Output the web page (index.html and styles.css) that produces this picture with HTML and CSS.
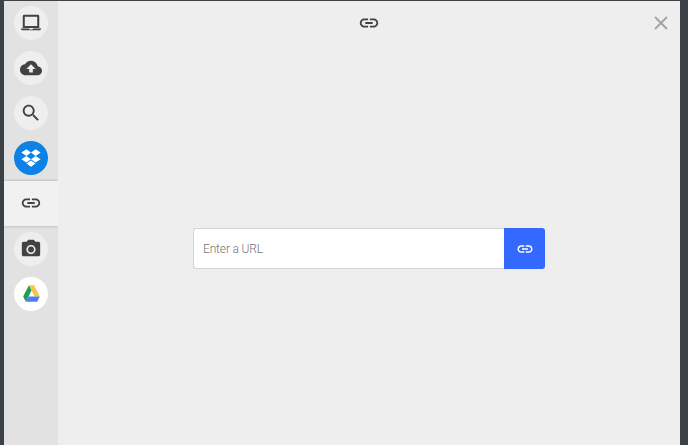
FILE: index.html
```html
<!DOCTYPE html>
<html lang="en">
<head>
<meta charset="utf-8">
<title>Select a file</title>
<link rel="stylesheet" href="styles.css">
</head>
<body>
<div class="modal">
  <nav class="sidebar">
    <div class="item"><span class="disc"><svg class="icon" viewBox="0 0 24 24"><path fill-rule="evenodd" d="M4.5 3h15A1.5 1.5 0 0 1 21 4.500V17.500H3V4.500A1.500 1.500 0 0 1 4.500 3zM5.200 5.200V15.300H18.800V5.200zM1 18h8.500c.4.700 1 1 1.500 1h2c.5 0 1.100-.3 1.500-1H23c0 1.200-.8 2-2 2H3c-1.200 0-2-.8-2-2z"/></svg></span></div>
    <div class="item"><span class="disc"><svg class="icon" viewBox="0 0 24 24"><path d="M19.35 10.04C18.67 6.59 15.64 4 12 4 9.11 4 6.6 5.64 5.35 8.04 2.34 8.36 0 10.91 0 14c0 3.31 2.69 6 6 6h13c2.76 0 5-2.24 5-5 0-2.64-2.05-4.78-4.65-4.96zM14 13v4h-4v-4H7l5-5 5 5h-3z"/></svg></span></div>
    <div class="item"><span class="disc"><svg class="icon" viewBox="0 0 24 24"><path d="M15.5 14h-.79l-.28-.27C15.41 12.59 16 11.11 16 9.5 16 5.91 13.09 3 9.5 3S3 5.91 3 9.5 5.91 16 9.5 16c1.61 0 3.09-.59 4.23-1.57l.27.28v.79l5 4.99L20.49 19l-4.99-5zm-6 0C7.01 14 5 11.99 5 9.5S7.01 5 9.5 5 14 7.01 14 9.5 11.99 14 9.5 14z"/></svg></span></div>
    <div class="item"><span class="disc disc-dropbox"><svg class="icon" viewBox="0 0 24 24"><path class="white" d="M7 2.5 1.5 6.1 7 9.7l5-3.6zM17 2.5l-5 3.6 5 3.6 5.5-3.6zM1.5 13.3 7 16.9l5-3.6-5-3.6zM17 9.7l-5 3.6 5 3.6 5.5-3.6zM7 18.1l5 3.4 5-3.4-5-3.3z"/></svg></span></div>
    <div class="item item-active"><svg class="icon" viewBox="0 0 24 24"><path d="M3.9 12c0-1.71 1.39-3.1 3.1-3.1h4V7H7c-2.76 0-5 2.24-5 5s2.24 5 5 5h4v-1.9H7c-1.71 0-3.1-1.39-3.1-3.1zM8 13h8v-2H8v2zm9-6h-4v1.9h4c1.71 0 3.1 1.39 3.1 3.1s-1.39 3.1-3.1 3.1h-4V17h4c2.76 0 5-2.24 5-5s-2.24-5-5-5z"/></svg></div>
    <div class="item"><span class="disc"><svg class="icon" viewBox="0 0 24 24"><circle cx="12" cy="12.5" r="3.2"/><path d="M9 2 7.17 4H4c-1.1 0-2 .9-2 2v12c0 1.1.9 2 2 2h16c1.1 0 2-.9 2-2V6c0-1.1-.9-2-2-2h-3.17L15 2H9zm3 15.5c-2.76 0-5-2.24-5-5s2.24-5 5-5 5 2.24 5 5-2.24 5-5 5z"/></svg></span></div>
    <div class="item"><span class="disc disc-drive"><svg class="icon" viewBox="0 0 24 24"><path class="drive-yellow" d="M9 2.500h6l6.500 12.800h-6z"/><path class="drive-green" d="M9 2.500 2.500 15.300l3 6.200L12 8.700z"/><path class="drive-blue" d="M8.500 15.300 5.500 21.500h13l3-6.200z"/></svg></span></div>
  </nav>
  <main class="main">
    <header class="top">
      <svg class="icon" viewBox="0 0 24 24"><path d="M3.9 12c0-1.71 1.39-3.1 3.1-3.1h4V7H7c-2.76 0-5 2.24-5 5s2.24 5 5 5h4v-1.9H7c-1.71 0-3.1-1.39-3.1-3.1zM8 13h8v-2H8v2zm9-6h-4v1.9h4c1.71 0 3.1 1.39 3.1 3.1s-1.39 3.1-3.1 3.1h-4V17h4c2.76 0 5-2.24 5-5s-2.24-5-5-5z"/></svg>
      <svg class="close" viewBox="0 0 16 16"><path d="M2 2l12 12M14 2L2 14"/></svg>
    </header>
    <div class="center">
      <form class="url-form">
        <input class="url-input" type="text" placeholder="Enter a URL">
        <button class="url-go" type="button"><svg class="icon icon-white" viewBox="0 0 24 24"><path d="M3.9 12c0-1.71 1.39-3.1 3.1-3.1h4V7H7c-2.76 0-5 2.24-5 5s2.24 5 5 5h4v-1.9H7c-1.71 0-3.1-1.39-3.1-3.1zM8 13h8v-2H8v2zm9-6h-4v1.9h4c1.71 0 3.1 1.39 3.1 3.1s-1.39 3.1-3.1 3.1h-4V17h4c2.76 0 5-2.24 5-5s-2.24-5-5-5z"/></svg></button>
      </form>
    </div>
  </main>
</div>
</body>
</html>
```
FILE: styles.css
```css
* { box-sizing: border-box; }
html, body { height: 100%; }
body {
  margin: 0;
  height: 445px;
  overflow: hidden;
  padding: 0 8px 0 4px;
  background: #3c4148;
  font-family: Roboto, "Liberation Sans", sans-serif;
}
.modal {
  display: flex;
  height: 445px;
  background: #eeeeee;
}
.sidebar {
  width: 54px;
  flex: none;
  background: #e2e2e2;
  overflow: hidden;
  box-shadow: inset 0 1px #3c4148;
}
.item {
  height: 45.2px;
  display: flex;
  align-items: center;
  justify-content: center;
}
.item-active {
  background: #f1f1f1;
  box-shadow: 0 0 3px rgba(0,0,0,.28);
  position: relative;
}
.disc {
  width: 34px;
  height: 34px;
  border-radius: 50%;
  background: #eeeeee;
  display: flex;
  align-items: center;
  justify-content: center;
}
.disc-dropbox { background: #0d82e6; }
.disc-drive { background: #ffffff; }
.icon { width: 22px; height: 22px; fill: #424242; display: block; }
.icon-white { fill: #ffffff; width: 18px; height: 18px; }
.white { fill: #ffffff; }
.disc-drive .icon { width: 21px; height: 21px; }
.drive-yellow { fill: #f6c644; }
.drive-green { fill: #1f9d57; }
.drive-blue { fill: #4a80ec; }
.main {
  flex: 1;
  display: flex;
  flex-direction: column;
  box-shadow: inset 0 1px #3c4148;
}
.top {
  height: 46px;
  flex: none;
  position: relative;
  display: flex;
  align-items: center;
  justify-content: center;
}
.top .icon { margin-bottom: 1px; }
.close {
  position: absolute;
  top: 15px;
  right: 11px;
  width: 16px;
  height: 16px;
  fill: none;
  stroke: #a3a3a3;
  stroke-width: 1.8;
}
.center {
  flex: 1;
  display: flex;
  justify-content: center;
  padding-top: 182px;
}
.url-form {
  display: flex;
  width: 352px;
  height: 41px;
  margin: 0;
}
.url-input {
  flex: 1;
  min-width: 0;
  height: 41px;
  border: 1px solid #d4d4d4;
  border-right: 0;
  border-radius: 3px 0 0 3px;
  padding: 0 9px;
  background: #ffffff;
  font: 300 12px Roboto, "Liberation Sans", sans-serif;
  letter-spacing: -0.15px;
  outline: none;
}
.url-input::placeholder { color: #757575; opacity: 1; }
.url-go {
  width: 41px;
  height: 41px;
  flex: none;
  border: 0;
  padding: 0;
  border-radius: 0 3px 3px 0;
  background: #3369ff;
  display: flex;
  align-items: center;
  justify-content: center;
}
```
